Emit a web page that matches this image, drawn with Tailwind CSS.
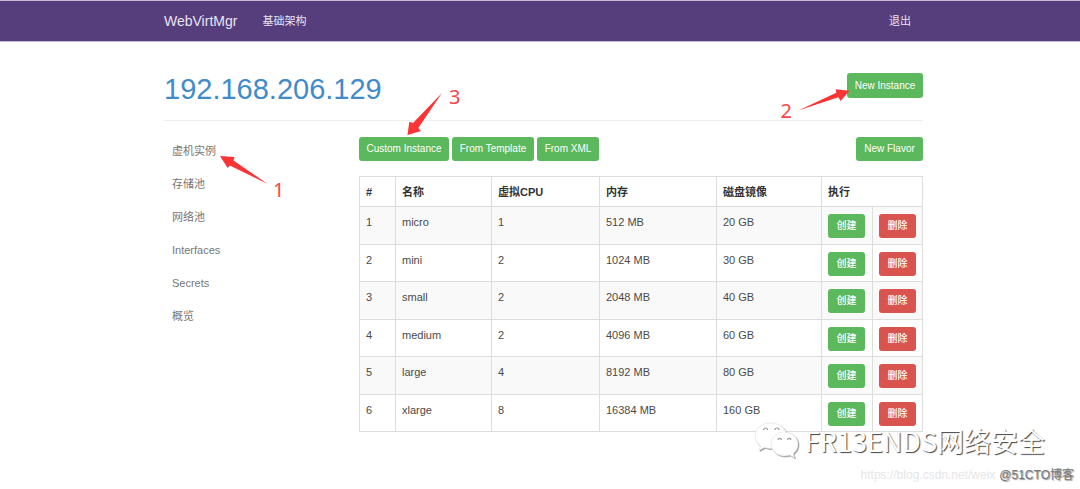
<!DOCTYPE html>
<html lang="zh-CN">
<head>
<meta charset="utf-8">
<meta name="viewport" content="width=device-width, initial-scale=1">
<title>WebVirtMgr</title>
<script src="https://cdn.jsdelivr.net/npm/@tailwindcss/browser@4"></script>
</head>
<body class="relative min-h-screen bg-white pb-14 font-['Liberation_Sans','Noto_Sans_CJK_SC',sans-serif] text-[11px] leading-4 text-[#4a4a4a]">

<header class="border-t border-b border-[#c5b9d6] bg-[#563d7c] pl-[7px]">
  <nav class="mx-auto flex h-10 max-w-[759px] items-center text-[#e9e3f2]">
    <a href="#" class="text-[14px] leading-5">WebVirtMgr</a>
    <a href="#" class="ml-[25px]">基础架构</a>
    <a href="#" class="mr-3 ml-auto">退出</a>
  </nav>
</header>

<div class="pl-[7px]">
<main class="relative mx-auto max-w-[759px]">
  <div class="flex items-start justify-between border-b border-[#eee] pt-[31px] pb-[15px]">
    <h1 class="text-[29px] leading-8 text-[#428bca]"><a href="#">192.168.206.129</a></h1>
    <button class="h-[25px] w-19 rounded-[3px] bg-[#5cb85c] text-[10px] text-white">New Instance</button>
  </div>

  <div class="flex">
    <ul class="flex w-[195px] shrink-0 flex-col gap-px pt-3.5 text-[#777]">
      <li><a href="#" class="block p-2">虚机实例</a></li>
      <li><a href="#" class="block p-2">存储池</a></li>
      <li><a href="#" class="block p-2">网络池</a></li>
      <li><a href="#" class="block p-2">Interfaces</a></li>
      <li><a href="#" class="block p-2">Secrets</a></li>
      <li><a href="#" class="block p-2">概览</a></li>
    </ul>

    <section class="grow pt-4">
      <div class="flex gap-[3px] text-[10px] text-white">
        <button class="h-6 w-[90px] rounded-[3px] bg-[#5cb85c]">Custom Instance</button>
        <button class="h-6 w-[82px] rounded-[3px] bg-[#5cb85c]">From Template</button>
        <button class="h-6 w-[62px] rounded-[3px] bg-[#5cb85c]">From XML</button>
        <button class="ml-auto h-6 w-[67px] rounded-[3px] bg-[#5cb85c]">New Flavor</button>
      </div>

      <table class="mt-[15px] w-full table-fixed border-collapse text-left [&_button]:block [&_button]:h-6 [&_button]:w-[37px] [&_button]:rounded-[3px] [&_button]:text-[10px] [&_button]:font-medium [&_button]:text-white [&_td]:border [&_td]:border-[#ddd] [&_td]:px-1.5 [&_td]:pt-[7px] [&_td]:align-top [&_th]:border [&_th]:border-[#ddd] [&_th]:px-1.5 [&_tbody_tr]:h-[37px] [&_tbody_tr:nth-child(odd)]:h-[38px] [&_tbody_tr:nth-child(odd)]:bg-[#f9f9f9]">
        <colgroup>
          <col class="w-[36px]"><col class="w-[96px]"><col class="w-[108px]"><col class="w-[117px]"><col class="w-[105px]"><col class="w-[51px]"><col class="w-[50px]">
        </colgroup>
        <thead class="text-[#333]">
          <tr class="h-[30px]"><th>#</th><th>名称</th><th>虚拟CPU</th><th>内存</th><th>磁盘镜像</th><th colspan="2">执行</th></tr>
        </thead>
        <tbody>
          <tr><td>1</td><td>micro</td><td>1</td><td>512 MB</td><td>20 GB</td><td><button class="bg-[#5cb85c]">创建</button></td><td><button class="bg-[#d9534f]">删除</button></td></tr>
          <tr><td>2</td><td>mini</td><td>2</td><td>1024 MB</td><td>30 GB</td><td><button class="bg-[#5cb85c]">创建</button></td><td><button class="bg-[#d9534f]">删除</button></td></tr>
          <tr><td>3</td><td>small</td><td>2</td><td>2048 MB</td><td>40 GB</td><td><button class="bg-[#5cb85c]">创建</button></td><td><button class="bg-[#d9534f]">删除</button></td></tr>
          <tr><td>4</td><td>medium</td><td>2</td><td>4096 MB</td><td>60 GB</td><td><button class="bg-[#5cb85c]">创建</button></td><td><button class="bg-[#d9534f]">删除</button></td></tr>
          <tr><td>5</td><td>large</td><td>4</td><td>8192 MB</td><td>80 GB</td><td><button class="bg-[#5cb85c]">创建</button></td><td><button class="bg-[#d9534f]">删除</button></td></tr>
          <tr><td>6</td><td>xlarge</td><td>8</td><td>16384 MB</td><td>160 GB</td><td><button class="bg-[#5cb85c]">创建</button></td><td><button class="bg-[#d9534f]">删除</button></td></tr>
        </tbody>
      </table>
    </section>
  </div>

  <!-- Step annotations laid over the page -->
  <svg class="pointer-events-none absolute top-[114px] left-[56px]" width="48" height="29" viewBox="220 156 48 29" fill="#fb3435" aria-hidden="true"><path d="M220 156 234.500 157 233.500 160.500 267.700 184 229.800 165.500 227.700 168Z"/></svg>
  <svg class="pointer-events-none absolute top-[47px] right-[73px]" width="52" height="22" viewBox="798 89 52 22" fill="#fb3435" aria-hidden="true"><path d="M849.5 90.7 840.7 101 838.3 97.3 798.3 110.5 836.3 92.7 835.7 89.2Z"/></svg>
  <svg class="pointer-events-none absolute top-[50px] left-[243px]" width="36" height="43" viewBox="407 92 36 43" fill="#fb3435" aria-hidden="true"><path d="M407.5 135 409.3 121.7 413 123 442 93 418.3 128 421 131Z"/></svg>
  <span class="absolute top-[138px] left-[109px] font-['Noto_Sans',sans-serif] text-[20px] leading-5 text-[#fb4445]">1</span>
  <span class="absolute top-[59px] right-[131px] font-['Noto_Sans',sans-serif] text-[20px] leading-5 text-[#fb4445]">2</span>
  <span class="absolute top-[45px] left-[285px] font-['Noto_Sans',sans-serif] text-[20px] leading-5 text-[#fb4445]">3</span>
</main>
</div>

<!-- Watermarks -->
<div class="absolute right-[35px] bottom-[30px] flex items-center gap-1.5">
  <svg class="drop-shadow-[1px_1px_0px_#999]" width="45" height="37" viewBox="0 0 45 37" fill="#fff" stroke="#ddd" stroke-width=".6" aria-hidden="true">
    <path d="M17 1C8 1 1 6.500 1 14c0 4 2 7.500 5.500 10L5 28.500l5.500-3c2 .6 4 1 6.500 1 9 0 16-5.500 16-12.500S26 1 17 1Z"/>
    <path d="M30.500 10C23 10 17 15.500 17 22s6 12 13.500 12c2 0 3.500-.3 5-.9l5 2.600-1.300-4.200C42.500 29.200 44 26 44 22c0-6.500-6-12-13.500-12Z"/>
    <g fill="none" stroke="#999" stroke-width="1.200"><path d="M9.500 8a2 2 0 0 1 4 0M21 8a2 2 0 0 1 4 0M24 18a1.700 1.700 0 0 1 3.400 0M33.500 18a1.700 1.700 0 0 1 3.400 0"/></g>
  </svg>
  <span class="font-['Noto_Sans_CJK_SC',sans-serif] text-[27px] leading-8 text-white [text-shadow:1px_1px_1px_#444]">FR13ENDS网络安全</span>
</div>
<div class="absolute right-1.5 bottom-1.5 flex items-center gap-1 whitespace-nowrap">
  <span class="text-[12px] text-[#e6e6e6]">https://blog.csdn.net/weix</span>
  <span class="text-[12px] text-[#777] [text-shadow:1px_1px_1px_#999]">@51CTO博客</span>
</div>
</body>
</html>
